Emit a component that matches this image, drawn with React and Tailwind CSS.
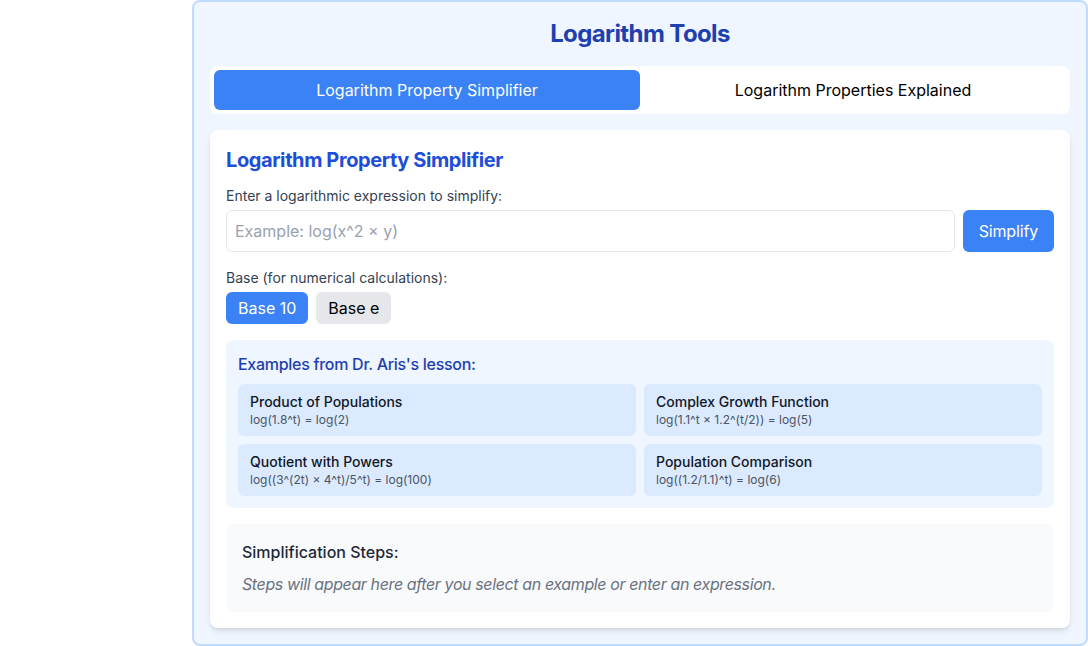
import React, { useState } from 'react';

const examples = [
  { title: 'Product of Populations', expr: 'log(1.8^t) = log(2)' },
  { title: 'Complex Growth Function', expr: 'log(1.1^t × 1.2^(t/2)) = log(5)' },
  { title: 'Quotient with Powers', expr: 'log((3^(2t) × 4^t)/5^t) = log(100)' },
  { title: 'Population Comparison', expr: 'log((1.2/1.1)^t) = log(6)' },
];

function Simplifier() {
  const [expression, setExpression] = useState('');
  const [base, setBase] = useState('10');

  return (
    <div className="bg-white rounded-lg shadow-md p-4">
      <h2 className="text-xl font-bold tracking-[-0.02em] text-[#1d4ed8] mb-3">Logarithm Property Simplifier</h2>

      <label className="block text-sm text-gray-700 mb-1">Enter a logarithmic expression to simplify:</label>
      <div className="flex gap-2 mb-4">
        <input
          type="text"
          value={expression}
          onChange={(e) => setExpression(e.target.value)}
          placeholder="Example: log(x^2 × y)"
          className="flex-1 px-2 py-2 border border-gray-200 rounded-md text-base placeholder:text-gray-400 outline-none"
        />
        <button className="px-4 py-2 bg-[#3b82f6] text-white rounded-md text-base tracking-[-0.01em]">Simplify</button>
      </div>

      <label className="block text-sm text-gray-700 mb-1">Base (for numerical calculations):</label>
      <div className="flex gap-2 mb-4">
        <button
          onClick={() => setBase('10')}
          className={`px-3 py-1 rounded-md text-base ${base === '10' ? 'bg-[#3b82f6] text-white' : 'bg-gray-200 text-black'}`}
        >
          Base 10
        </button>
        <button
          onClick={() => setBase('e')}
          className={`px-3 py-1 rounded-md text-base ${base === 'e' ? 'bg-[#3b82f6] text-white' : 'bg-gray-200 text-black'}`}
        >
          Base e
        </button>
      </div>

      <div className="bg-[#eff6ff] rounded-lg p-3 mb-4">
        <h3 className="text-base font-medium tracking-[-0.018em] text-[#1e40af] mb-2">Examples from Dr. Aris's lesson:</h3>
        <div className="grid grid-cols-2 gap-2">
          {examples.map((ex) => (
            <button
              key={ex.title}
              onClick={() => setExpression(ex.expr)}
              className="text-left bg-[#dbeafe] rounded-md px-3 py-2"
            >
              <div className="text-sm font-medium text-gray-900">{ex.title}</div>
              <div className="text-xs text-gray-600">{ex.expr}</div>
            </button>
          ))}
        </div>
      </div>

      <div className="bg-gray-50 rounded-lg p-4">
        <h3 className="text-base font-medium text-gray-800 mb-2">Simplification Steps:</h3>
        <p className="text-base italic tracking-[-0.024em] text-gray-500">
          Steps will appear here after you select an example or enter an expression.
        </p>
      </div>
    </div>
  );
}

export default function App() {
  const [tab, setTab] = useState('simplifier');

  return (
    <div className="w-[1088px] flex justify-end font-['Inter',sans-serif]">
      <div className="w-[896px] bg-[#eff6ff] border-2 border-[#bfdbfe] rounded-lg p-4">
        <h1 className="text-2xl font-bold tracking-tight text-[#1e40af] text-center mb-4">Logarithm Tools</h1>

        <div className="flex bg-white rounded-lg p-1 mb-4">
          <button
            onClick={() => setTab('simplifier')}
            className={`flex-1 py-2 rounded-md text-base ${tab === 'simplifier' ? 'bg-[#3b82f6] text-white' : 'text-black'}`}
          >
            Logarithm Property Simplifier
          </button>
          <button
            onClick={() => setTab('explained')}
            className={`flex-1 py-2 rounded-md text-base ${tab === 'explained' ? 'bg-[#3b82f6] text-white' : 'text-black'}`}
          >
            Logarithm Properties Explained
          </button>
        </div>

        <Simplifier />
      </div>
    </div>
  );
}
